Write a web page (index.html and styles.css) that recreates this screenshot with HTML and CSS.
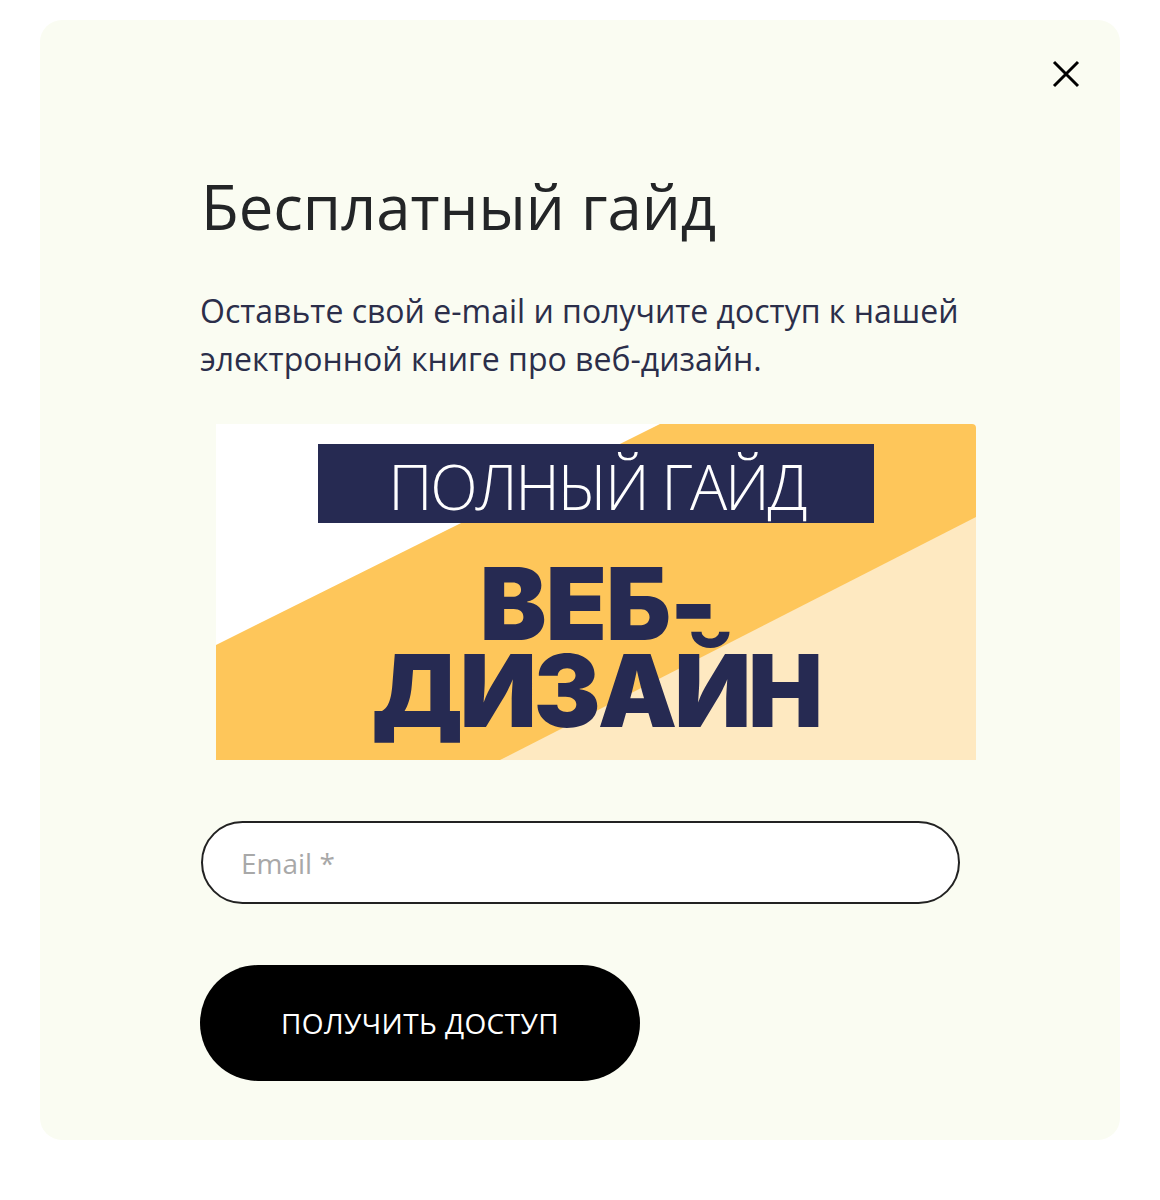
FILE: index.html
```html
<!DOCTYPE html>
<html lang="ru">
<head>
<meta charset="utf-8">
<title>Бесплатный гайд</title>
<link rel="stylesheet" href="styles.css">
</head>
<body>
<div class="modal">
  <button class="close" aria-label="Закрыть">
    <svg viewBox="0 0 28 28" width="28" height="28"><path d="M2 2 L26 26 M26 2 L2 26" stroke="#000" stroke-width="3" fill="none"/></svg>
  </button>
  <h1 class="title">Бесплатный гайд</h1>
  <p class="lead">Оставьте свой e-mail и получите доступ к нашей электронной книге про веб-дизайн.</p>
  <div class="banner">
    <svg class="banner-bg" viewBox="0 0 760 336" preserveAspectRatio="none">
      <rect x="0" y="0" width="760" height="336" fill="#ffffff"/>
      <polygon points="0,221 444,0 760,0 760,336 0,336" fill="#fec65a"/>
      <polygon points="284,336 760,93 760,336" fill="#fee9c1"/>
    </svg>
    <div class="banner-label"><span>ПОЛНЫЙ ГАЙД</span></div>
    <div class="banner-title"><span class="line-1">ВЕБ-</span><br><span class="line-2">ДИЗАЙН</span></div>
  </div>
  <form class="form">
    <input class="email" type="email" placeholder="Email *">
    <button class="submit" type="button">ПОЛУЧИТЬ ДОСТУП</button>
  </form>
</div>
</body>
</html>
```
FILE: styles.css
```css
* { box-sizing: border-box; }
html, body { margin: 0; padding: 0; background: #ffffff; }
body { padding: 20px 40px 60px; font-family: "Open Sans", "Liberation Sans", sans-serif; }
.modal {
  position: relative;
  width: 1080px;
  height: 1120px;
  background: #fafcf2;
  border-radius: 22px;
  padding: 150px 160px 60px;
}
.close {
  position: absolute;
  top: 40px;
  right: 40px;
  width: 28px;
  height: 28px;
  padding: 0;
  border: 0;
  background: none;
  display: flex;
}
.title {
  margin: 0;
  font-size: 61.6px;
  line-height: 72px;
  font-weight: 400;
  color: #232527;
  margin-left: 1px;
}
.lead {
  margin: 45px 0 0;
  font-size: 32px;
  line-height: 48px;
  color: #2b2e4a;
  max-width: 790px;
}
.banner {
  position: relative;
  margin: 41px 0 0 16px;
  width: 760px;
  height: 336px;
  display: flex;
  flex-direction: column;
  align-items: center;
  padding-top: 20px;
  overflow: hidden;
  border-top-right-radius: 4px;
}
.banner-bg { position: absolute; inset: 0; width: 100%; height: 100%; }
.banner-label {
  position: relative;
  width: 556px;
  height: 79px;
  background: #262a52;
  display: flex;
  align-items: center;
  justify-content: center;
}
.banner-label span {
  color: #ffffff;
  font-weight: 300;
  font-size: 62px;
  line-height: 1;
  font-stretch: 90%;
  letter-spacing: -2.3px;
  margin-top: 4px;
  margin-right: -2px;
}
.banner-title {
  position: relative;
  margin-top: 37px;
  font-family: Inter, "Roboto", sans-serif;
  font-weight: 900;
  font-size: 100px;
  line-height: 87px;
  letter-spacing: -3px;
  color: #262a52;
  text-align: center;
}
.banner-title .line-1 { letter-spacing: -1px; margin-left: 4px; }
.form { margin: 61px 0 0; display: flex; flex-direction: column; align-items: flex-start; gap: 61px; }
.email {
  width: 759px;
  height: 83px;
  margin-left: 1px;
  border: 2px solid #222222;
  border-radius: 42px;
  background: #ffffff;
  padding: 0 38px;
  font-family: "Open Sans", sans-serif;
  font-size: 28px;
  color: #222;
  outline: none;
}
.email::placeholder { color: #a8a8a8; }
.submit {
  width: 440px;
  height: 116px;
  border: 0;
  border-radius: 58px;
  background: #000000;
  color: #ffffff;
  font-family: "Open Sans", sans-serif;
  font-size: 28px;
  font-weight: 500;
  letter-spacing: 0.4px;
}
```
